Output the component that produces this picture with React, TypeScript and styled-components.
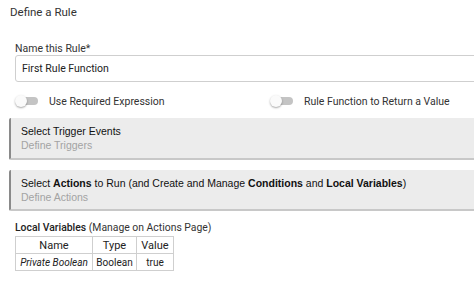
import React from "react";
import styled, { createGlobalStyle } from "styled-components";

const Global = createGlobalStyle`
  html, body { margin: 0; padding: 0; background: #fff; }
  body { font-family: Roboto, "Noto Sans", Arial, sans-serif; color: #333; overflow: hidden; }
`;

const Page = styled.div`
  width: 474px;
  height: 286px;
  overflow: hidden;
  padding: 4px 0 0 9px;
  box-sizing: border-box;
`;

const Title = styled.div`
  font-size: 11.5px;
  line-height: 16px;
  color: #333;
  margin-left: 1px;
`;

const Form = styled.div`
  padding-left: 6px;
  margin-top: 22px;
  width: 540px;
`;

const Label = styled.div`
  font-size: 10.5px;
  line-height: 13px;
  color: #333;
`;

const Input = styled.div`
  height: 27px;
  box-sizing: border-box;
  border: 1px solid #cfcfcf;
  border-radius: 3px;
  padding-left: 6px;
  display: flex;
  align-items: center;
  font-size: 10.5px;
  color: #222;
`;

const ToggleRow = styled.div`
  display: grid;
  grid-template-columns: 255px 1fr;
  margin-top: 12px;
  height: 14px;
  align-items: center;
`;

const ToggleItem = styled.div`
  display: flex;
  align-items: center;
  gap: 11px;
  font-size: 10.5px;
  color: #333;
`;

const Switch = styled.span`
  position: relative;
  width: 23px;
  height: 12px;
  display: inline-block;
  &::before {
    content: "";
    position: absolute;
    left: 4px;
    right: 0;
    top: 2px;
    height: 8px;
    border-radius: 4px;
    background: #c4c4c4;
  }
  &::after {
    content: "";
    position: absolute;
    left: 0;
    top: 0;
    width: 12px;
    height: 12px;
    border-radius: 50%;
    background: #fafafa;
    box-shadow: 0 1px 2px rgba(0, 0, 0, 0.35);
  }
`;

const Panel = styled.div<{ $top: number; $h: number }>`
  margin-top: ${(p) => p.$top}px;
  margin-right: -40px;
  background: #ececec;
  border-left: 2px solid #8a8a8a;
  border-bottom: 2px solid #c8c8c8;
  border-radius: 2px 0 0 2px;
  padding: 7px 0 0 10px;
  height: ${(p) => p.$h}px;
  box-sizing: border-box;
  font-family: "Liberation Sans", Arial, sans-serif;
`;

const PanelTitle = styled.div`
  font-size: 10.5px;
  line-height: 13px;
  color: #111;
  b { font-weight: bold; }
`;

const PanelSub = styled.div`
  font-size: 10.5px;
  line-height: 14px;
  color: #a3a3a3;
`;

const VarsSection = styled.div`
  padding-left: 6px;
  margin-top: 10px;
`;

const VarsLabel = styled.div`
  font-size: 10.4px;
  line-height: 13px;
  color: #333;
  b { font-weight: 500; color: #222; }
`;

const Table = styled.table`
  margin-top: 2px;
  border-collapse: collapse;
  border: 1.5px solid #222;
  font-size: 10px;
  color: #222;
  table-layout: fixed;
`;

const Th = styled.th<{ $w: number }>`
  width: ${(p) => p.$w}px;
  font-weight: normal;
  font-size: 11px;
  height: 17px;
  padding: 0;
  border: 1px solid #cfcfcf;
  text-align: center;
  box-sizing: border-box;
`;

const Td = styled.td<{ $italic?: boolean }>`
  height: 16px;
  padding: 0;
  border: 1px solid #cfcfcf;
  text-align: center;
  white-space: nowrap;
  font-style: ${(p) => (p.$italic ? "italic" : "normal")};
`;

export default function App() {
  return (
    <>
      <Global />
      <Page>
        <Title>Define a Rule</Title>
        <Form>
          <Label>Name this Rule*</Label>
          <Input>First Rule Function</Input>
          <ToggleRow>
            <ToggleItem>
              <Switch />
              Use Required Expression
            </ToggleItem>
            <ToggleItem>
              <Switch />
              Rule Function to Return a Value
            </ToggleItem>
          </ToggleRow>
        </Form>
        <Panel $top={10} $h={42}>
          <PanelTitle>Select Trigger Events</PanelTitle>
          <PanelSub>Define Triggers</PanelSub>
        </Panel>
        <Panel $top={10} $h={41}>
          <PanelTitle>
            Select <b>Actions</b> to Run (and Create and Manage <b>Conditions</b> and{" "}
            <b>Local Variables</b>)
          </PanelTitle>
          <PanelSub>Define Actions</PanelSub>
        </Panel>
        <VarsSection>
          <VarsLabel>
            <b>Local Variables</b> (Manage on Actions Page)
          </VarsLabel>
          <Table>
            <thead>
              <tr>
                <Th $w={77}>Name</Th>
                <Th $w={44}>Type</Th>
                <Th $w={37}>Value</Th>
              </tr>
            </thead>
            <tbody>
              <tr>
                <Td $italic>Private Boolean</Td>
                <Td>Boolean</Td>
                <Td>true</Td>
              </tr>
            </tbody>
          </Table>
        </VarsSection>
      </Page>
    </>
  );
}
